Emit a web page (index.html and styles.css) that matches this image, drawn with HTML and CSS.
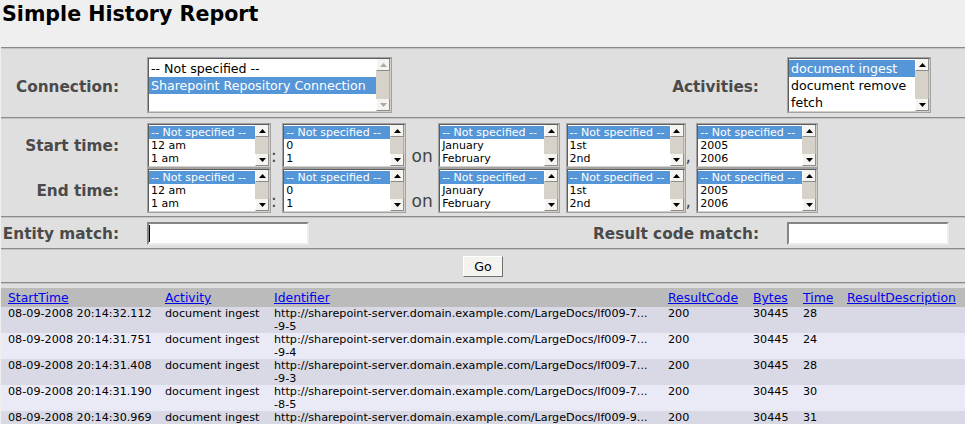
FILE: index.html
```html
<!DOCTYPE html>
<html>
<head>
<meta charset="utf-8">
<title>Simple History Report</title>
<link rel="stylesheet" href="styles.css">
</head>
<body>
<h1 class="title">Simple History Report</h1>
<div class="form">
  <div class="sep sep-top"></div>
  <div class="sec sec-conn grid4">
    <div class="lbl lbl-conn">Connection:</div>
    <div class="cell">
      <div class="lb lb-big w-conn"><div class="lb-in">
        <div class="sb sb-big sb-off">
          <div class="sb-btn"><svg class="ar" width="7" height="4" viewBox="0 0 7 4"><path d="M0 4L3.5 0L7 4Z"/></svg></div>
          <div class="sb-mid"></div>
          <div class="sb-btn"><svg class="ar" width="7" height="4" viewBox="0 0 7 4"><path d="M0 0H7L3.5 4Z"/></svg></div>
        </div>
        <div class="opts">
          <div class="opt">-- Not specified --</div>
          <div class="opt sel">Sharepoint Repository Connection</div>
          <div class="opt">&nbsp;</div>
        </div>
      </div></div>
    </div>
    <div class="lbl lbl-conn">Activities:</div>
    <div class="cell">
      <div class="lb lb-big w-act"><div class="lb-in">
        <div class="sb sb-big">
          <div class="sb-btn"><svg class="ar" width="7" height="4" viewBox="0 0 7 4"><path d="M0 4L3.5 0L7 4Z"/></svg></div>
          <div class="sb-mid"></div>
          <div class="sb-btn"><svg class="ar" width="7" height="4" viewBox="0 0 7 4"><path d="M0 0H7L3.5 4Z"/></svg></div>
        </div>
        <div class="opts">
          <div class="opt sel">document ingest</div>
          <div class="opt">document remove</div>
          <div class="opt">fetch</div>
        </div>
      </div></div>
    </div>
  </div>
  <div class="sep"></div>
  <div class="sec sec-time grid2">
    <div class="lbl">Start time:</div>
    <div class="timeline"><div class="lb lb-time w-h"><div class="lb-in"><div class="sb"><div class="sb-btn"><svg class="ar" width="7" height="4" viewBox="0 0 7 4"><path d="M0 4L3.5 0L7 4Z"/></svg></div><div class="sb-mid"></div><div class="sb-btn"><svg class="ar" width="7" height="4" viewBox="0 0 7 4"><path d="M0 0H7L3.5 4Z"/></svg></div></div><div class="opts"><div class="opt sel">-- Not specified --</div><div class="opt">12 am</div><div class="opt">1 am</div></div></div></div>: <div class="lb lb-time w-mi"><div class="lb-in"><div class="sb"><div class="sb-btn"><svg class="ar" width="7" height="4" viewBox="0 0 7 4"><path d="M0 4L3.5 0L7 4Z"/></svg></div><div class="sb-mid"></div><div class="sb-btn"><svg class="ar" width="7" height="4" viewBox="0 0 7 4"><path d="M0 0H7L3.5 4Z"/></svg></div></div><div class="opts"><div class="opt sel">-- Not specified --</div><div class="opt">0</div><div class="opt">1</div></div></div></div> on <div class="lb lb-time w-mo"><div class="lb-in"><div class="sb"><div class="sb-btn"><svg class="ar" width="7" height="4" viewBox="0 0 7 4"><path d="M0 4L3.5 0L7 4Z"/></svg></div><div class="sb-mid"></div><div class="sb-btn"><svg class="ar" width="7" height="4" viewBox="0 0 7 4"><path d="M0 0H7L3.5 4Z"/></svg></div></div><div class="opts"><div class="opt sel">-- Not specified --</div><div class="opt">January</div><div class="opt">February</div></div></div></div> <div class="lb lb-time w-d"><div class="lb-in"><div class="sb"><div class="sb-btn"><svg class="ar" width="7" height="4" viewBox="0 0 7 4"><path d="M0 4L3.5 0L7 4Z"/></svg></div><div class="sb-mid"></div><div class="sb-btn"><svg class="ar" width="7" height="4" viewBox="0 0 7 4"><path d="M0 0H7L3.5 4Z"/></svg></div></div><div class="opts"><div class="opt sel">-- Not specified --</div><div class="opt">1st</div><div class="opt">2nd</div></div></div></div>, <div class="lb lb-time w-y"><div class="lb-in"><div class="sb"><div class="sb-btn"><svg class="ar" width="7" height="4" viewBox="0 0 7 4"><path d="M0 4L3.5 0L7 4Z"/></svg></div><div class="sb-mid"></div><div class="sb-btn"><svg class="ar" width="7" height="4" viewBox="0 0 7 4"><path d="M0 0H7L3.5 4Z"/></svg></div></div><div class="opts"><div class="opt sel">-- Not specified --</div><div class="opt">2005</div><div class="opt">2006</div></div></div></div></div>
    <div class="lbl">End time:</div>
    <div class="timeline"><div class="lb lb-time w-h"><div class="lb-in"><div class="sb"><div class="sb-btn"><svg class="ar" width="7" height="4" viewBox="0 0 7 4"><path d="M0 4L3.5 0L7 4Z"/></svg></div><div class="sb-mid"></div><div class="sb-btn"><svg class="ar" width="7" height="4" viewBox="0 0 7 4"><path d="M0 0H7L3.5 4Z"/></svg></div></div><div class="opts"><div class="opt sel">-- Not specified --</div><div class="opt">12 am</div><div class="opt">1 am</div></div></div></div>: <div class="lb lb-time w-mi"><div class="lb-in"><div class="sb"><div class="sb-btn"><svg class="ar" width="7" height="4" viewBox="0 0 7 4"><path d="M0 4L3.5 0L7 4Z"/></svg></div><div class="sb-mid"></div><div class="sb-btn"><svg class="ar" width="7" height="4" viewBox="0 0 7 4"><path d="M0 0H7L3.5 4Z"/></svg></div></div><div class="opts"><div class="opt sel">-- Not specified --</div><div class="opt">0</div><div class="opt">1</div></div></div></div> on <div class="lb lb-time w-mo"><div class="lb-in"><div class="sb"><div class="sb-btn"><svg class="ar" width="7" height="4" viewBox="0 0 7 4"><path d="M0 4L3.5 0L7 4Z"/></svg></div><div class="sb-mid"></div><div class="sb-btn"><svg class="ar" width="7" height="4" viewBox="0 0 7 4"><path d="M0 0H7L3.5 4Z"/></svg></div></div><div class="opts"><div class="opt sel">-- Not specified --</div><div class="opt">January</div><div class="opt">February</div></div></div></div> <div class="lb lb-time w-d"><div class="lb-in"><div class="sb"><div class="sb-btn"><svg class="ar" width="7" height="4" viewBox="0 0 7 4"><path d="M0 4L3.5 0L7 4Z"/></svg></div><div class="sb-mid"></div><div class="sb-btn"><svg class="ar" width="7" height="4" viewBox="0 0 7 4"><path d="M0 0H7L3.5 4Z"/></svg></div></div><div class="opts"><div class="opt sel">-- Not specified --</div><div class="opt">1st</div><div class="opt">2nd</div></div></div></div>, <div class="lb lb-time w-y"><div class="lb-in"><div class="sb"><div class="sb-btn"><svg class="ar" width="7" height="4" viewBox="0 0 7 4"><path d="M0 4L3.5 0L7 4Z"/></svg></div><div class="sb-mid"></div><div class="sb-btn"><svg class="ar" width="7" height="4" viewBox="0 0 7 4"><path d="M0 0H7L3.5 4Z"/></svg></div></div><div class="opts"><div class="opt sel">-- Not specified --</div><div class="opt">2005</div><div class="opt">2006</div></div></div></div></div>
  </div>
  <div class="sep"></div>
  <div class="sec sec-match grid4">
    <div class="lbl">Entity match:</div>
    <div class="cell"><div class="tin"><span class="caret"></span></div></div>
    <div class="lbl">Result code match:</div>
    <div class="cell"><div class="tin"></div></div>
  </div>
  <div class="sep"></div>
  <div class="sec sec-go">
    <button class="go" type="button">Go</button>
  </div>
  <div class="sep"></div>
  <table class="results">
    <colgroup>
      <col class="c1"><col class="c2"><col class="c3"><col class="c4"><col class="c5"><col class="c6"><col class="c7">
    </colgroup>
    <thead>
      <tr>
        <th><a href="#">StartTime</a></th>
        <th><a href="#">Activity</a></th>
        <th><a href="#">Identifier</a></th>
        <th><a href="#">ResultCode</a></th>
        <th><a href="#">Bytes</a></th>
        <th><a href="#">Time</a></th>
        <th><a href="#">ResultDescription</a></th>
      </tr>
    </thead>
    <tbody>
      <tr class="odd">
        <td>08-09-2008 20:14:32.112</td><td>document ingest</td>
        <td>http://sharepoint-server.domain.example.com/LargeDocs/lf009-7...<br>-9-5</td>
        <td>200</td><td>30445</td><td>28</td><td></td>
      </tr>
      <tr class="even">
        <td>08-09-2008 20:14:31.751</td><td>document ingest</td>
        <td>http://sharepoint-server.domain.example.com/LargeDocs/lf009-7...<br>-9-4</td>
        <td>200</td><td>30445</td><td>24</td><td></td>
      </tr>
      <tr class="odd">
        <td>08-09-2008 20:14:31.408</td><td>document ingest</td>
        <td>http://sharepoint-server.domain.example.com/LargeDocs/lf009-7...<br>-9-3</td>
        <td>200</td><td>30445</td><td>28</td><td></td>
      </tr>
      <tr class="even">
        <td>08-09-2008 20:14:31.190</td><td>document ingest</td>
        <td>http://sharepoint-server.domain.example.com/LargeDocs/lf009-7...<br>-8-5</td>
        <td>200</td><td>30445</td><td>30</td><td></td>
      </tr>
      <tr class="odd tall">
        <td>08-09-2008 20:14:30.969</td><td>document ingest</td>
        <td>http://sharepoint-server.domain.example.com/LargeDocs/lf009-9...</td>
        <td>200</td><td>30445</td><td>31</td><td></td>
      </tr>
    </tbody>
  </table>
</div>
</body>
</html>
```

FILE: styles.css
```css
html, body {
  margin: 0;
  padding: 0;
}

body {
  background: #efefef;
  font-family: "DejaVu Sans", "Noto Sans", sans-serif;
  padding-left: 1px;
  width: 964px;
}

.title {
  margin: 0;
  height: 47px;
  box-sizing: border-box;
  padding: 2px 0 0 1px;
  font-size: 20.6px;
  line-height: 24px;
  font-weight: bold;
  color: #000;
}

.form {
  background: #dfdfdf;
}

.sep {
  border-top: 1px solid #8a8a8a;
  border-bottom: 1px solid #c4c4c4;
}

.grid4 {
  display: grid;
  grid-template-columns: 118px 414px 170px 178px;
  column-gap: 28px;
  align-items: center;
}

.grid2 {
  display: grid;
  grid-template-columns: 118px 1fr;
  grid-auto-rows: 45px;
  column-gap: 28px;
  align-items: center;
}

.sec-conn { padding: 8px 0 4px; }
.sec-time { padding: 4px 0 3px; }
.sec-match { padding: 4px 0 3px; }
.sec-go {
  padding: 6px 0 5px;
  display: flex;
  justify-content: center;
}

.lbl {
  text-align: right;
  font-weight: bold;
  font-size: 15.3px;
  color: #4a4a4a;
  white-space: nowrap;
}

.lbl-conn { padding-top: 3px; }

.cell { display: flex; }

/* list boxes */
.lb {
  display: inline-block;
  box-sizing: border-box;
  background: #fff;
  border: 1px solid #a2a2a2;
  vertical-align: baseline;
}

.lb-in {
  box-sizing: border-box;
  height: 100%;
  border: 1px solid;
  border-color: #5e5e5e #d4d0c8 #d4d0c8 #5e5e5e;
}

.lb-big { height: 56px; }
.lb-time { height: 45px; }

.w-conn { width: 245px; }
.w-act { width: 144px; }
.w-h { width: 124px; }
.w-mi { width: 124px; }
.w-mo { width: 122px; }
.w-d { width: 120px; }
.w-y { width: 122px; }

.opts {
  margin-right: 14px;
  padding: 1px 0;
}

.lb-big .opts { padding: 1px 0 0; }

.opt {
  padding-left: 2px;
  white-space: nowrap;
  color: #000;
}

.lb-big .opt {
  font-size: 12.6px;
  height: 17px;
  line-height: 17px;
}

.lb-time .opt {
  font-size: 11px;
  height: 13px;
  line-height: 13px;
}

.opt.sel {
  background: #5596d8;
  color: #fff;
}

.sb {
  float: right;
  width: 14px;
  height: 100%;
  display: flex;
  flex-direction: column;
}

.sb-btn {
  box-sizing: border-box;
  height: 12px;
  background: #f5f4f0;
  border-right: 1px solid #8c8c8c;
  border-bottom: 1px solid #8c8c8c;
  border-left: 1px solid #ffffff;
  display: flex;
  align-items: center;
  justify-content: center;
}

.sb-mid {
  flex: 1;
  background: #d6d2ca;
  border-right: 1px solid #b4b0a8;
}

.ar { display: block; fill: #000; }
.sb-off .ar { fill: #a9a9a9; }

/* time row */
.timeline {
  font-size: 17px;
  color: #444;
  white-space: nowrap;
}

/* text inputs */
.tin {
  box-sizing: border-box;
  width: 162px;
  height: 23px;
  background: #fff;
  border: 2px solid;
  border-color: #858585 #ececec #ececec #858585;
  padding: 1px 0 0 0;
}

.caret {
  display: block;
  width: 1px;
  height: 17px;
  background: #000;
}

.go {
  box-sizing: border-box;
  width: 40px;
  height: 21px;
  padding: 0;
  margin: 0;
  font-family: "DejaVu Sans", sans-serif;
  font-size: 12.6px;
  color: #000;
  background: #f4f3ef;
  border: 1px solid;
  border-color: #ffffff #6e6e6e #6e6e6e #ffffff;
}

/* results */
.results {
  margin-top: 4px;
  width: 964px;
  border-collapse: collapse;
  table-layout: fixed;
}

.c1 { width: 157px; }
.c2 { width: 109px; }
.c3 { width: 394px; }
.c4 { width: 85px; }
.c5 { width: 50px; }
.c6 { width: 44px; }
.c7 { width: 125px; }

.results th {
  background: #bbbbbb;
  text-align: left;
  font-weight: normal;
  font-size: 12.4px;
  line-height: 15px;
  padding: 2px 7px;
  white-space: nowrap;
}

.results th a {
  color: #0000ee;
  text-decoration: underline;
}

.results td {
  font-size: 11.2px;
  line-height: 13px;
  padding: 0 7px;
  vertical-align: top;
  white-space: nowrap;
  overflow: hidden;
  color: #000;
}

.results tr.tall td { height: 26px; }

.results tr.odd td { background: #d9d9e5; }
.results tr.even td { background: #eaeaf6; }
```
